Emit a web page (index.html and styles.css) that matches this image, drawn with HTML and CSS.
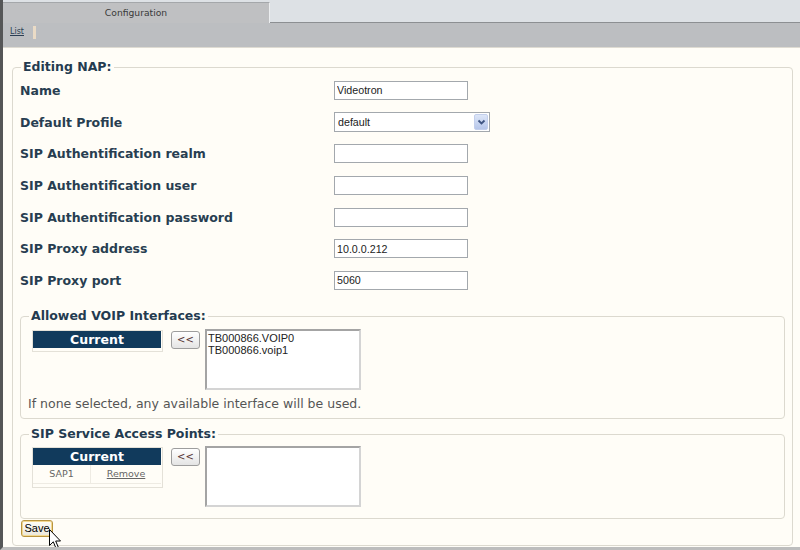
FILE: index.html
```html
<!DOCTYPE html>
<html>
<head>
<meta charset="utf-8">
<title>Configuration</title>
<link rel="stylesheet" href="styles.css">
</head>
<body>
<div class="tabs">
  <div class="tab">Configuration</div>
  <div class="tab-rest"></div>
</div>
<div class="subbar">
  <a href="#" class="list">List</a><span class="sep"></span>
</div>
<div class="content">
  <fieldset class="main">
    <legend>Editing NAP:</legend>
    <div class="form">
      <div class="row"><label class="lbl">Name</label><input class="txt" type="text" value="Videotron"></div>
      <div class="row"><label class="lbl">Default Profile</label>
        <div class="select"><span>default</span><span class="arrow"><svg width="9" height="7" viewBox="0 0 9 7"><path d="M1.5 1.5 L4.5 4.5 L7.5 1.5" fill="none" stroke="#3f5582" stroke-width="1.8"/></svg></span></div>
      </div>
      <div class="row"><label class="lbl">SIP Authentification realm</label><input class="txt" type="text" value=""></div>
      <div class="row"><label class="lbl">SIP Authentification user</label><input class="txt" type="text" value=""></div>
      <div class="row"><label class="lbl">SIP Authentification password</label><input class="txt" type="password" value=""></div>
      <div class="row"><label class="lbl">SIP Proxy address</label><input class="txt" type="text" value="10.0.0.212"></div>
      <div class="row"><label class="lbl">SIP Proxy port</label><input class="txt" type="text" value="5060"></div>
    </div>

    <fieldset class="sub voip">
      <legend>Allowed VOIP Interfaces:</legend>
      <div class="picker">
        <div class="cur cur-empty"><div class="cur-h">Current</div></div>
        <button class="btn" type="button">&lt;&lt;</button>
        <div class="listbox">
          <div class="opt">TB000866.VOIP0</div>
          <div class="opt">TB000866.voip1</div>
        </div>
      </div>
      <p class="note">If none selected, any available interface will be used.</p>
    </fieldset>

    <fieldset class="sub sap">
      <legend>SIP Service Access Points:</legend>
      <div class="picker">
        <div class="cur">
          <div class="cur-h">Current</div>
          <div class="cur-row"><span class="cell">SAP1</span><a href="#" class="cell rm">Remove</a></div>
        </div>
        <button class="btn" type="button">&lt;&lt;</button>
        <div class="listbox"></div>
      </div>
    </fieldset>

    <button class="save" type="button">Save</button>
  </fieldset>
</div>
<svg class="cursor" width="13" height="21" viewBox="0 0 13 21"><path d="M0.5 0.5 L0.5 16.5 L4.3 12.8 L7 19.3 L9.3 18.3 L6.7 12 L11.5 12 Z" fill="#fff" stroke="#000" stroke-width="1" stroke-linejoin="round"/></svg>
</body>
</html>
```
FILE: styles.css
```css
html, body {
  margin: 0;
  padding: 0;
}
body {
  height: 550px;
  box-sizing: border-box;
  border-left: 3px solid #555657;
  border-bottom: 3px solid #bdbdbd;
  display: flex;
  flex-direction: column;
  background: #fffdf7;
  font-family: "DejaVu Sans", sans-serif;
  overflow: hidden;
  position: relative;
}

/* top tabs */
.tabs {
  display: flex;
  height: 23px;
  background: #dde1e5;
  flex: none;
}
.tab {
  width: 267px;
  height: 21px;
  box-sizing: border-box;
  margin-top: 2px;
  background: #bfc0c2;
  border-top: 1px solid #a4a7aa;
  border-right: 1px solid #eceef0;
  text-align: center;
  font-size: 9.2px;
  line-height: 19px;
  color: #3a3a3a;
}
.tab-rest {
  flex: 1;
  border-bottom: 1px solid #8c8f92;
}
.subbar {
  height: 25px;
  box-sizing: border-box;
  background: #bcbec1;
  border-bottom: 1px solid #dedbd2;
  display: flex;
  align-items: flex-start;
  padding: 4px 0 0 7px;
  flex: none;
}
.list {
  font-size: 8px;
  line-height: 9.5px;
  color: #2b3e54;
  text-decoration: underline;
}
.sep {
  width: 3px;
  height: 13px;
  margin: -1px 0 0 9px;
  background: #eadbc6;
}

/* content */
.content {
  flex: 1;
  display: flex;
  flex-direction: column;
  padding: 12px 7px 1px 9px;
  min-height: 0;
}
fieldset {
  min-width: 0;
}
legend {
  padding: 0 2px;
  margin-left: 1px;
  font-weight: bold;
  font-size: 12.5px;
  line-height: 14.5px;
  color: #243b50;
}
.main {
  flex: 1;
  margin: 0;
  border: 1px solid #dcd9cf;
  border-radius: 4px;
  padding: 0 7px 8px 7px;
}
.row {
  display: grid;
  grid-template-columns: 314px 1fr;
  height: 31.7px;
  align-items: center;
}
.lbl {
  font-weight: bold;
  font-size: 12.5px;
  color: #283e51;
}
.txt {
  width: 134px;
  height: 19px;
  box-sizing: border-box;
  margin: 0;
  border: 1px solid #a3a8ad;
  padding: 0 2px;
  font: 10.7px "Liberation Sans", Arial, sans-serif;
  color: #222;
  background: #fff;
  outline: none;
}
.select {
  width: 156px;
  height: 20px;
  box-sizing: border-box;
  border: 1px solid #a3a8ad;
  background: #fff;
  display: flex;
  align-items: center;
  justify-content: space-between;
  padding-left: 3px;
  font: 10.7px "Liberation Sans", Arial, sans-serif;
  color: #222;
}
.arrow {
  width: 14px;
  height: 16px;
  box-sizing: border-box;
  margin-right: 1px;
  background: linear-gradient(#dde6f8, #b6c6ea);
  border: 1px solid #c3cfec;
  border-radius: 2px;
  display: flex;
  align-items: center;
  justify-content: center;
}

/* sub fieldsets */
.sub {
  margin: 13px 0 0;
  border: 1px solid #dcd9cf;
  border-radius: 4px;
  padding: 5px 7px 7px;
}
.sap {
  margin-top: 8px;
  padding-top: 4px;
  padding-bottom: 11px;
}
.picker {
  display: flex;
  align-items: flex-start;
  margin-left: 4px;
}
.cur {
  width: 131px;
  box-sizing: border-box;
  border: 1px solid #e4e1d8;
  padding: 0 1px 3px 0;
  margin-top: 1px;
}
.cur-h {
  background: #113a5c;
  color: #fff;
  font-weight: bold;
  font-size: 12.5px;
  text-align: center;
  height: 17px;
  line-height: 17px;
}
.cur-row {
  display: grid;
  grid-template-columns: 57px 1fr;
  height: 19px;
  font-size: 9.5px;
  color: #666;
}
.cell {
  display: flex;
  align-items: center;
  justify-content: center;
  border-bottom: 1px solid #eeebe3;
  border-left: 1px solid #eeebe3;
}
.cell:first-child {
  border-left: none;
}
.rm {
  color: #666;
  text-decoration: underline;
}
.btn {
  margin: 2px 0 0 8px;
  width: 29px;
  height: 18px;
  box-sizing: border-box;
  border: 1px solid #9d9d9d;
  border-radius: 3px;
  background: linear-gradient(#ffffff, #e4e4e4);
  font: 10px "DejaVu Sans", sans-serif;
  color: #553333;
  padding: 0;
  display: flex;
  align-items: center;
  justify-content: center;
}
.listbox {
  margin-left: 5px;
  width: 156px;
  height: 61px;
  box-sizing: border-box;
  border: 2px solid;
  border-color: #a4a4a4 #d4d4d4 #d4d4d4 #a4a4a4;
  background: #fff;
  padding: 1px 1px;
  font: 11px "Liberation Sans", Arial, sans-serif;
  color: #222;
  line-height: 12px;
}
.note {
  margin: 7px 0 0;
  font-size: 12.5px;
  line-height: 14.5px;
  color: #555;
}
.save {
  display: block;
  margin: 1px 0 0 1px;
  width: 32px;
  height: 17px;
  box-sizing: border-box;
  border: 1px solid #b8943f;
  border-radius: 3px;
  background: linear-gradient(#fffef8, #e9e6da);
  box-shadow: inset 0 0 0 1px #f3d890;
  font: 11px "Liberation Sans", Arial, sans-serif;
  color: #000;
  padding: 0;
}
.cursor {
  position: absolute;
  left: 46px;
  top: 529px;
}
```
